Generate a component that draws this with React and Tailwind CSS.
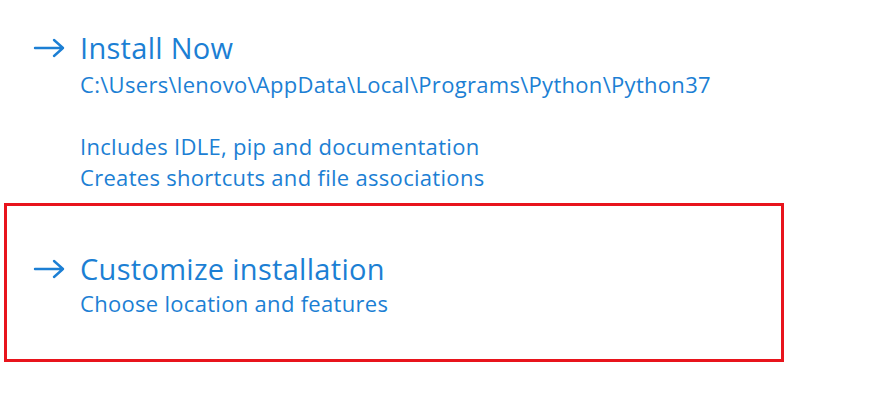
import React from 'react';

const Arrow = () => (
  <svg width="33" height="20" viewBox="0 0 33 20" fill="none" stroke="currentColor" strokeWidth="2.4" strokeLinecap="round" strokeLinejoin="round">
    <path d="M2 10h28M21 2l9 8-9 8" />
  </svg>
);

const Option = ({ title, children }) => (
  <div>
    <div className="flex items-center h-[34px]">
      <div className="w-[47px] pl-[33px] box-content flex items-center"><Arrow /></div>
      <span className="text-[29px] leading-[34px] tracking-[0.3px]">{title}</span>
    </div>
    <div className="pl-[80px] pt-[4px] text-[22px] leading-[31px] tracking-[0.3px]">{children}</div>
  </div>
);

export default function App() {
  return (
    <div className="w-[870px] h-[404px] bg-white text-[#1c7fd4] overflow-hidden" style={{ fontFamily: '"Open Sans", "Noto Sans", sans-serif' }}>
      <div className="pt-[31px]">
        <Option title="Install Now">
          <div>C:\Users\lenovo\AppData\Local\Programs\Python\Python37</div>
          <div className="mt-[31px]">Includes IDLE, pip and documentation</div>
          <div>Creates shortcuts and file associations</div>
        </Option>
      </div>
      <div className="ml-[4px] mt-[10px] w-[780px] h-[159px] border-[3px] border-[#e8141c] pt-[46px]">
        <div className="-ml-[7px]">
          <Option title="Customize installation">
            <div className="-mt-[2px]">Choose location and features</div>
          </Option>
        </div>
      </div>
    </div>
  );
}
